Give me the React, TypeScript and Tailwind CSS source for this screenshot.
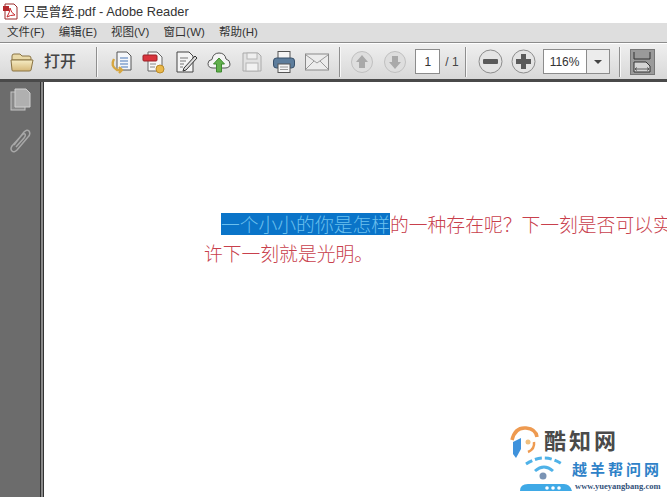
const cjk = { fontFamily: '"Liberation Sans","Noto Sans CJK SC",sans-serif' };

function Sep({ className }: { className: string }) {
  return <div className={`h-[30px] w-[2px] shrink-0 border-l border-[#8f8f8f] bg-[#f8f8f8] ${className}`} />;
}

function Slot({ children }: { children: React.ReactNode }) {
  return <div className="flex h-[36px] w-[32.6px] shrink-0 items-center justify-center">{children}</div>;
}

function Folder() {
  return (
    <svg width="24" height="20" viewBox="0 0 24 20">
      <defs>
        <linearGradient id="fo" x1="0" y1="0" x2="0" y2="1">
          <stop offset="0" stopColor="#f6ecc4" />
          <stop offset="1" stopColor="#d6b878" />
        </linearGradient>
      </defs>
      <path d="M2 4 Q2 2 4 2 H10 L12 4 H19 Q21 4 21 6 V8 H2 Z" fill="#e9d9a8" stroke="#8a7444" />
      <path d="M1 8 H23 L21 18 Q21 19 19 19 H3 Q2 19 2 18 Z" fill="url(#fo)" stroke="#8a7444" />
    </svg>
  );
}

function DocArrow() {
  return (
    <svg width="24" height="24" viewBox="0 0 24 24">
      <path d="M8 2 H18 L22 6 V20 H8 Z" fill="#f4f6fa" stroke="#555" />
      <path d="M11 8 H19 M11 11 H19 M11 14 H19 M12 17 H19" stroke="#4a78b8" strokeWidth="1.2" />
      <path d="M5 9 Q1 16 8 20 L13 20 M10 17 L13 20 L10 23" fill="none" stroke="#d6a640" strokeWidth="2.4" />
    </svg>
  );
}

function DocSign() {
  return (
    <svg width="24" height="24" viewBox="0 0 24 24">
      <path d="M6 2 H15 L20 7 V21 H6 Z" fill="#f7f7f7" stroke="#666" />
      <rect x="1" y="5" width="14" height="6" rx="1" fill="#d9343c" stroke="#9a2026" />
      <path d="M8 14 H14 M8 17 H13" stroke="#888" />
      <circle cx="18" cy="19" r="4" fill="#eab84a" stroke="#b88a2a" />
    </svg>
  );
}

function DocPen() {
  return (
    <svg width="24" height="24" viewBox="0 0 24 24">
      <path d="M3 2 H15 L19 6 V22 H3 Z" fill="#f4f4f4" stroke="#444" />
      <path d="M6 8 H14 M6 11 H12 M6 14 H10 M6 17 H9" stroke="#777" />
      <path d="M10 18 L21 6 L23 8 L12 20 L9 21 Z" fill="#ddd" stroke="#333" />
    </svg>
  );
}

function CloudUp() {
  return (
    <svg width="24" height="22" viewBox="0 0 24 22">
      <path d="M6 17 Q1 17 1 12.5 Q1 9 5 8.5 Q6 2 12 2 Q18 2 19 8 Q23 9 23 13 Q23 17 18 17 Z" fill="#f4f4f4" stroke="#555" />
      <path d="M12 7 L17.5 13 H14.5 V21 H9.5 V13 H6.5 Z" fill="#62b04c" stroke="#3e8a30" />
    </svg>
  );
}

function Save() {
  return (
    <svg width="20" height="22" viewBox="0 0 20 22">
      <path d="M1 2 H16 L19 5 V20 H1 Z" fill="#e2e2e2" stroke="#aaa" />
      <rect x="5" y="2" width="10" height="6" fill="#efefef" stroke="#b4b4b4" />
      <rect x="4" y="12" width="12" height="8" fill="#f2f2f2" stroke="#b4b4b4" />
    </svg>
  );
}

function Printer() {
  return (
    <svg width="24" height="24" viewBox="0 0 24 24">
      <rect x="6" y="1.5" width="12" height="8" fill="#f5f5f5" stroke="#555" />
      <rect x="1.5" y="8" width="21" height="10" rx="3" fill="#5d7d9c" stroke="#38506a" />
      <rect x="6" y="14" width="12" height="8.5" fill="#f5f5f5" stroke="#555" />
      <path d="M8 17 H16 M8 19.5 H16" stroke="#999" />
    </svg>
  );
}

function Mail() {
  return (
    <svg width="24" height="18" viewBox="0 0 24 18">
      <rect x="0.5" y="1" width="23" height="16" fill="#ececec" stroke="#8a8a8a" />
      <path d="M1 2 L12 10 L23 2 M1 16 L9 8 M23 16 L15 8" fill="none" stroke="#9a9a9a" />
    </svg>
  );
}

function RoundArrow({ down }: { down?: boolean }) {
  return (
    <svg width="24" height="24" viewBox="0 0 24 24">
      <circle cx="12" cy="12" r="10.5" fill="#dedede" stroke="#c0c0c0" />
      <path
        d={down ? "M12 19 L18 12 H15 V6 H9 V12 H6 Z" : "M12 5 L18 12 H15 V18 H9 V12 H6 Z"}
        fill="#a9a9a9"
      />
    </svg>
  );
}

function RoundZoom({ plus }: { plus?: boolean }) {
  return (
    <svg width="25" height="25" viewBox="0 0 25 25">
      <circle cx="12.5" cy="12.5" r="11.5" fill="#e4e4e4" stroke="#8c8c8c" />
      {plus ? (
        <path d="M10 5 H15 V10 H20 V15 H15 V20 H10 V15 H5 V10 H10 Z" fill="#5a5a5a" />
      ) : (
        <rect x="5" y="10" width="15" height="5" rx="1" fill="#5a5a5a" />
      )}
    </svg>
  );
}

function FitWidth() {
  return (
    <svg width="18" height="22" viewBox="0 0 18 22">
      <path d="M1 1 V8 H17 V1" fill="none" stroke="#333" />
      <path d="M1 21 V11 H13 L17 15 V21 Z" fill="#d4d4d4" stroke="#333" />
      <path d="M2 18 H16 M2 18 L4 16.5 M2 18 L4 19.5 M16 18 L14 16.5 M16 18 L14 19.5" fill="none" stroke="#444" strokeWidth="0.8" />
    </svg>
  );
}

function PagesIcon() {
  return (
    <svg width="21" height="23" viewBox="0 0 21 23">
      <rect x="1" y="4" width="14" height="18" fill="#8a8a8a" stroke="#c4c4c4" />
      <path d="M5 1 H16 L20 5 V19 H5 Z" fill="#b0b0b0" stroke="#d0d0d0" />
    </svg>
  );
}

function ClipIcon() {
  return (
    <svg width="22" height="26" viewBox="0 0 22 26">
      <path
        d="M5 17 L15 4 Q18 1 20 3 Q22 6 19 9 L8 22 Q5 25 3 23 Q1 21 3 18 L13 7 Q15 5 16 6 Q17 8 15 10 L7 19"
        fill="none"
        stroke="#a8a8a8"
        strokeWidth="1.5"
      />
    </svg>
  );
}

function Watermark() {
  return (
    <div className="absolute left-[509px] top-[424px] h-[73px] w-[158px]">
      <div className="flex items-center">
        <svg width="32" height="36" viewBox="0 0 32 36">
          <path d="M3 16 Q6 3 17 4 Q27 5 28 13" fill="none" stroke="#ee9a50" strokeWidth="3.5" />
          <path d="M25 18 Q26 25 19 28" fill="none" stroke="#ee9a50" strokeWidth="2.5" />
          <path d="M4 18 L12 14 V25 L7 34 L4 30 Z" fill="#3f92dc" />
          <circle cx="19" cy="18" r="2.5" fill="#f0c080" />
        </svg>
        <span className="ml-[3px] text-[22px] leading-none font-bold tracking-[3px] text-[#4a4a4a]" style={cjk}>酷知网</span>
      </div>
      <div className="ml-[11px] flex">
        <svg width="52" height="38" viewBox="0 0 52 38" className="-mt-[6px] shrink-0">
          <path d="M6 10 Q24 -2 42 10" fill="none" stroke="#4fb2e8" strokeWidth="3" strokeDasharray="7 3" />
          <path d="M15 17 Q24 9 33 17" fill="none" stroke="#4fb2e8" strokeWidth="3" />
          <circle cx="23" cy="22" r="3.5" fill="#7a93b4" />
          <path d="M0 37 Q0 30 8 30 H44 Q50 30 52 37 Z" fill="#3fa9e6" />
          <circle cx="27" cy="34" r="1.8" fill="#fff" />
          <circle cx="33" cy="34" r="1.8" fill="#fff" />
          <circle cx="39" cy="34" r="1.8" fill="#fff" />
        </svg>
        <div className="flex flex-col">
          <span className="text-[15px] leading-[20px] font-bold tracking-[3px] whitespace-nowrap text-[#2f82c8]" style={cjk}>越羊帮问网</span>
          <span className="mt-[1px] ml-[3px] text-[8.5px] leading-[10px] font-bold text-[#33527a]" style={{ fontFamily: '"Liberation Serif",serif' }}>www.yueyangbang.com</span>
        </div>
      </div>
    </div>
  );
}

export default function App() {
  return (
    <div className="relative flex h-[497px] w-[667px] flex-col overflow-hidden bg-white" style={cjk}>
      <div className="flex h-[23px] shrink-0 items-center bg-white pl-[2px]">
        <svg width="18" height="18" viewBox="0 0 18 18">
          <path d="M3 1 H12 L15 4 V16 H3 Z" fill="#fff" stroke="#9a2a2a" />
          <path d="M1 3 H7 V8 H1 Z" fill="#b5282c" />
          <path d="M5 14 Q8 9 8 5 Q9 10 13 12 Q8 12 5 14 Z" fill="none" stroke="#c8282c" />
        </svg>
        <span className="ml-[3px] text-[12.8px] text-[#333]">只是曾经.pdf - Adobe Reader</span>
      </div>

      <div className="flex h-[19px] shrink-0 items-center gap-[14px] bg-[#dedede] pl-[7px] text-[11.5px] text-[#333]">
        <span>文件(F)</span>
        <span>编辑(E)</span>
        <span>视图(V)</span>
        <span>窗口(W)</span>
        <span>帮助(H)</span>
      </div>

      <div className="h-[1px] shrink-0 bg-[#8c8c8c]" />
      <div className="flex h-[36px] shrink-0 items-center border-t border-white bg-gradient-to-b from-[#efefef] to-[#d8d8d8]">
        <div className="ml-[10px] shrink-0"><Folder /></div>
        <span className="ml-[10px] w-[33px] shrink-0 text-[16px] font-medium whitespace-nowrap text-[#444]">打开</span>
        <Sep className="ml-[19px]" />
        <div className="ml-[7px] flex">
          <Slot><DocArrow /></Slot>
          <Slot><DocSign /></Slot>
          <Slot><DocPen /></Slot>
          <Slot><CloudUp /></Slot>
          <Slot><Save /></Slot>
          <Slot><Printer /></Slot>
          <Slot><Mail /></Slot>
        </div>
        <Sep className="ml-[6px]" />
        <div className="ml-[5px] flex">
          <Slot><RoundArrow /></Slot>
          <Slot><RoundArrow down /></Slot>
        </div>
        <div className="ml-[4px] flex h-[25px] w-[25px] shrink-0 items-center justify-center border border-[#8c8c8c] bg-white text-[12px] text-[#333]">1</div>
        <span className="ml-[5px] w-[15px] shrink-0 text-[12px] text-[#444]">/ 1</span>
        <Sep className="ml-[5px]" />
        <div className="ml-[7px] flex">
          <Slot><RoundZoom /></Slot>
          <Slot><RoundZoom plus /></Slot>
        </div>
        <div className="ml-[3px] flex h-[25px] w-[67px] shrink-0 border border-[#8c8c8c] bg-white">
          <div className="flex w-[43px] items-center justify-center border-r border-[#8c8c8c] text-[12px] text-[#333]">116%</div>
          <div className="flex flex-1 items-center justify-center bg-[#ececec]">
            <div className="h-0 w-0 border-x-[4px] border-t-[4px] border-x-transparent border-t-[#444]" />
          </div>
        </div>
        <Sep className="ml-[9px]" />
        <div className="ml-[9px] flex h-[26px] w-[25px] shrink-0 items-center justify-center border border-[#777] bg-[#9a9a9a]">
          <FitWidth />
        </div>
      </div>
      <div className="h-[3px] shrink-0 bg-[#4a4a4a]" />

      <div className="flex min-h-0 flex-1">
        <div className="flex w-[40px] shrink-0 flex-col items-center bg-[#6c6c6c] pt-[6px]">
          <PagesIcon />
          <div className="mt-[17px]"><ClipIcon /></div>
        </div>
        <div className="w-[4px] shrink-0 border-x border-[#333] bg-[#8a8a8a]" />
        <div className="min-w-0 flex-1 overflow-hidden bg-white pl-[160px] pt-[127px] text-[18.8px] leading-[29px] whitespace-nowrap text-[#c8404c]" style={{ fontFamily: '"Noto Sans CJK SC",sans-serif', fontWeight: 300 }}>
          <div className="flex items-center pl-[17px]">
            <span className="inline-block h-[22px] bg-[#0a74c8] leading-[22px] text-[#6cc0ee]">一个小小的你是怎样</span>
            <span>的一种存在呢？下一刻是否可以实</span>
          </div>
          <div>许下一刻就是光明。</div>
        </div>
      </div>
      <Watermark />
    </div>
  );
}
